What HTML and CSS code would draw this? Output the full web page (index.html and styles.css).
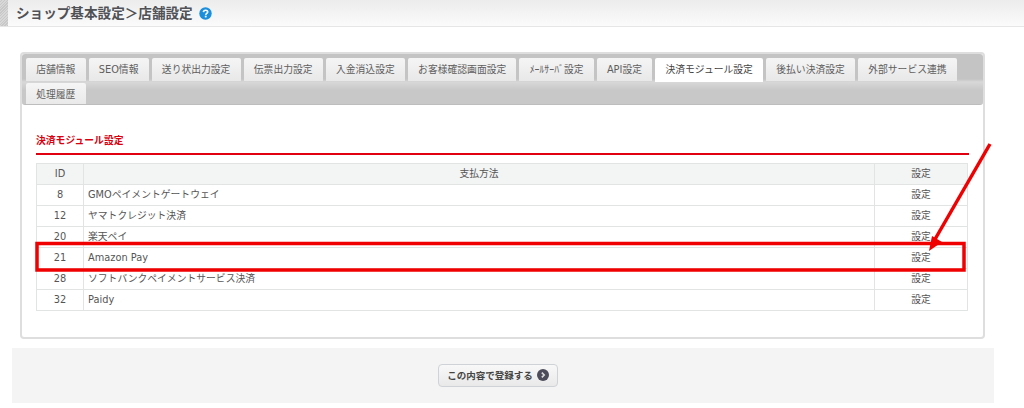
FILE: index.html
```html
<!DOCTYPE html>
<html lang="ja">
<head>
<meta charset="utf-8">
<title>店舗設定</title>
<link rel="stylesheet" href="styles.css">
</head>
<body>
<header class="page-head">
  <div class="head-stripe"></div>
  <h1 class="head-title">ショップ基本設定＞店舗設定</h1>
  <svg class="help-icon" width="13" height="13" viewBox="0 0 13 13" aria-hidden="true">
    <circle cx="6.5" cy="6.5" r="6.2" fill="#1b8fdc"/>
    <path d="M4.4 5.1C4.5 3.9 5.4 3.2 6.6 3.2C7.8 3.2 8.7 3.9 8.7 5C8.7 6.3 6.9 6.4 6.7 7.8" fill="none" stroke="#fff" stroke-width="1.6"/>
    <rect x="5.8" y="8.7" width="1.8" height="1.7" fill="#fff"/>
  </svg>
</header>

<section class="panel">
  <nav class="tabs">
    <a class="tab">店舗情報</a>
    <a class="tab">SEO情報</a>
    <a class="tab">送り状出力設定</a>
    <a class="tab">伝票出力設定</a>
    <a class="tab">入金消込設定</a>
    <a class="tab">お客様確認画面設定</a>
    <a class="tab">ﾒｰﾙｻｰﾊﾞ設定</a>
    <a class="tab">API設定</a>
    <a class="tab tab-active">決済モジュール設定</a>
    <a class="tab">後払い決済設定</a>
    <a class="tab">外部サービス連携</a>
    <a class="tab">処理履歴</a>
  </nav>
  <div class="panel-body">
    <h2 class="section-title">決済モジュール設定</h2>
    <table class="pay-table">
      <thead>
        <tr><th class="col-id">ID</th><th>支払方法</th><th class="col-set">設定</th></tr>
      </thead>
      <tbody>
        <tr><td class="col-id">8</td><td>GMOペイメントゲートウェイ</td><td class="col-set">設定</td></tr>
        <tr><td class="col-id">12</td><td>ヤマトクレジット決済</td><td class="col-set">設定</td></tr>
        <tr><td class="col-id">20</td><td>楽天ペイ</td><td class="col-set">設定</td></tr>
        <tr><td class="col-id">21</td><td>Amazon Pay</td><td class="col-set">設定</td></tr>
        <tr><td class="col-id">28</td><td>ソフトバンクペイメントサービス決済</td><td class="col-set">設定</td></tr>
        <tr><td class="col-id">32</td><td>Paidy</td><td class="col-set">設定</td></tr>
      </tbody>
    </table>
  </div>
</section>

<footer class="action-bar">
  <button class="submit-btn" type="button">この内容で登録する
    <svg class="btn-icon" width="12" height="12" viewBox="0 0 12 12" aria-hidden="true">
      <circle cx="6" cy="6" r="6" fill="#4c4c5c"/>
      <path d="M4.8 3.6L7.2 6L4.8 8.4" fill="none" stroke="#ddd" stroke-width="1.6"/>
    </svg>
  </button>
</footer>

<svg class="annotation" width="1024" height="408" viewBox="0 0 1024 408" aria-hidden="true">
  <rect x="37" y="243.5" width="927" height="26.5" fill="none" stroke="#f00000" stroke-width="3.5"/>
  <line x1="990" y1="144" x2="934" y2="241" stroke="#f00000" stroke-width="3.5"/>
  <path d="M929 251L932 236L942 242Z" fill="#f00000"/>
</svg>
</body>
</html>
```
FILE: styles.css
```css
* { box-sizing: border-box; }
html, body { margin: 0; padding: 0; }
body {
  position: relative;
  width: 1024px;
  height: 408px;
  overflow: hidden;
  background: #fff;
  color: #555;
  font-family: "DejaVu Sans", "Noto Sans CJK JP", sans-serif;
  font-size: 9.8px;
}
.page-head {
  display: flex;
  align-items: center;
  height: 27px;
  background: linear-gradient(#ececec, #fbfbfb);
  border-bottom: 1px solid #e6e6e6;
}
.head-stripe {
  width: 8px;
  height: 26px;
  background: repeating-linear-gradient(135deg, #d8d8d8 0 1px, #c8c8c8 1px 2px);
}
.head-title {
  margin: 0 0 0 8px;
  font-size: 13.6px;
  line-height: 26px;
  font-weight: 700;
  color: #4f5156;
}
.help-icon { margin-left: 6px; }
.panel {
  width: 965px;
  height: 287px;
  margin: 25px 0 0 20px;
  border: 2px solid #dedede;
  border-radius: 4px;
}
.tabs {
  display: flex;
  flex-wrap: wrap;
  align-content: flex-start;
  align-items: flex-start;
  gap: 2px 3px;
  width: 961px;
  height: 51px;
  padding: 4px 4px 0;
  overflow: hidden;
  background: linear-gradient(#c4c4c4 0, #c4c4c4 25px, #d8d8d8 28px, #c8c8c8 36px);
  border-bottom: 1px solid #bdbdbd;
  border-radius: 3px;
}
.tab {
  display: block;
  height: 23px;
  padding: 0 10.2px;
  line-height: 23px;
  background: linear-gradient(#f5f5f5, #e8e8e8);
  border-radius: 2px 2px 0 0;
  color: #5e5e5e;
  white-space: nowrap;
}
.tab-active {
  height: 24px;
  margin-bottom: -1px;
  background: #fff;
  color: #444;
}
.panel-body { padding: 0 14px; }
.section-title {
  width: 933px;
  height: 50px;
  margin: 0;
  padding-top: 29px;
  border-bottom: 2px solid #e00010;
  color: #d9000f;
  font-size: 9.8px;
  line-height: 14px;
  font-weight: 700;
}
.pay-table {
  width: 932px;
  margin-top: 8px;
  border-collapse: collapse;
  table-layout: fixed;
}
.pay-table th, .pay-table td {
  height: 21px;
  padding: 0 4px;
  border: 1px solid #e2e3e3;
  font-weight: 400;
  line-height: 14px;
  color: #555;
}
.pay-table th { background: #f3f4f4; text-align: center; }
.col-id { width: 47px; text-align: center; }
.col-set { width: 93px; text-align: center; }
.action-bar {
  display: flex;
  justify-content: center;
  align-items: center;
  width: 982px;
  height: 55px;
  margin: 9px 0 0 12px;
  padding: 0 10px 1px 0;
  background: #f4f4f4;
}
.submit-btn {
  display: flex;
  align-items: center;
  justify-content: center;
  gap: 4px;
  width: 120px;
  height: 23px;
  padding: 0;
  background: linear-gradient(#f8f8f8, #e9e9e9);
  border: 1px solid #cfd2d6;
  border-radius: 4px;
  color: #444;
  font-family: inherit;
  font-size: 9.5px;
  font-weight: 700;
}
.annotation {
  position: absolute;
  left: 0;
  top: 0;
  pointer-events: none;
}
```
